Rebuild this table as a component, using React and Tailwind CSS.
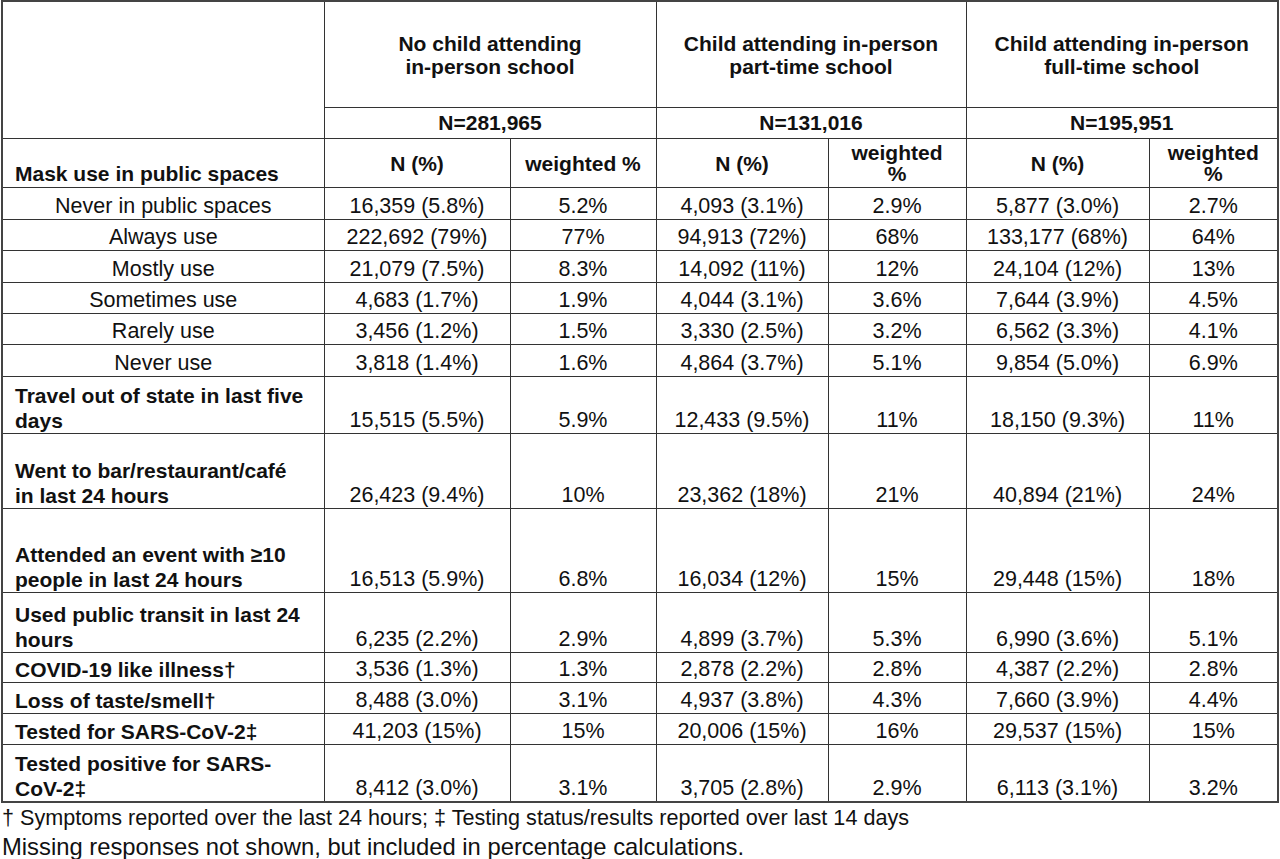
import React from "react";

const mask = [
  ["Never in public spaces", "16,359 (5.8%)", "5.2%", "4,093 (3.1%)", "2.9%", "5,877 (3.0%)", "2.7%", "h-[32px]"],
  ["Always use", "222,692 (79%)", "77%", "94,913 (72%)", "68%", "133,177 (68%)", "64%", "h-[31px]"],
  ["Mostly use", "21,079 (7.5%)", "8.3%", "14,092 (11%)", "12%", "24,104 (12%)", "13%", "h-[32px]"],
  ["Sometimes use", "4,683 (1.7%)", "1.9%", "4,044 (3.1%)", "3.6%", "7,644 (3.9%)", "4.5%", "h-[31px]"],
  ["Rarely use", "3,456 (1.2%)", "1.5%", "3,330 (2.5%)", "3.2%", "6,562 (3.3%)", "4.1%", "h-[31px]"],
  ["Never use", "3,818 (1.4%)", "1.6%", "4,864 (3.7%)", "5.1%", "9,854 (5.0%)", "6.9%", "h-[32px]"],
];

const other = [
  [["Travel out of state in last five", "days"], "15,515 (5.5%)", "5.9%", "12,433 (9.5%)", "11%", "18,150 (9.3%)", "11%", "h-[57px]"],
  [["Went to bar/restaurant/café", "in last 24 hours"], "26,423 (9.4%)", "10%", "23,362 (18%)", "21%", "40,894 (21%)", "24%", "h-[75px]"],
  [["Attended an event with ≥10", "people in last 24 hours"], "16,513 (5.9%)", "6.8%", "16,034 (12%)", "15%", "29,448 (15%)", "18%", "h-[84px]"],
  [["Used public transit in last 24", "hours"], "6,235 (2.2%)", "2.9%", "4,899 (3.7%)", "5.3%", "6,990 (3.6%)", "5.1%", "h-[60px]"],
  [["COVID-19 like illness†"], "3,536 (1.3%)", "1.3%", "2,878 (2.2%)", "2.8%", "4,387 (2.2%)", "2.8%", "h-[30px]"],
  [["Loss of taste/smell†"], "8,488 (3.0%)", "3.1%", "4,937 (3.8%)", "4.3%", "7,660 (3.9%)", "4.4%", "h-[31px]"],
  [["Tested for SARS-CoV-2‡"], "41,203 (15%)", "15%", "20,006 (15%)", "16%", "29,537 (15%)", "15%", "h-[31px]"],
  [["Tested positive for SARS-", "CoV-2‡"], "8,412 (3.0%)", "3.1%", "3,705 (2.8%)", "2.9%", "6,113 (3.1%)", "3.2%", "h-[58px]"],
];

const cell = "border border-[#333] px-0 align-bottom text-center pb-0";
const head = "border border-[#333] text-center align-middle font-bold text-[21px]";

export default function App() {
  return (
    <div className="bg-white w-[1280px] h-[859px] text-[#111] font-['Liberation_Sans',Arial,sans-serif] pl-[1px]">
      <table className="table-fixed border-collapse border-2 border-[#444] w-[1277px] text-[21.5px] leading-[25px]">
        <colgroup>
          <col className="w-[322px]" />
          <col className="w-[186px]" />
          <col className="w-[146px]" />
          <col className="w-[172px]" />
          <col className="w-[138px]" />
          <col className="w-[183px]" />
          <col className="w-[129px]" />
        </colgroup>
        <tbody>
          <tr className="h-[106px]">
            <td rowSpan={2} className="border border-[#333]"></td>
            <td colSpan={2} className={`${head} leading-[23px] pt-[2px]`}>No child attending<br />in-person school</td>
            <td colSpan={2} className={`${head} leading-[23px] pt-[2px]`}>Child attending in-person<br />part-time school</td>
            <td colSpan={2} className={`${head} leading-[23px] pt-[2px]`}>Child attending in-person<br />full-time school</td>
          </tr>
          <tr className="h-[31px]">
            <td colSpan={2} className={head}>N=281,965</td>
            <td colSpan={2} className={head}>N=131,016</td>
            <td colSpan={2} className={head}>N=195,951</td>
          </tr>
          <tr className="h-[49px]">
            <td className="border border-[#333] align-bottom font-bold text-[21px] leading-[24px] pl-3 pb-[1px]">Mask use in public spaces</td>
            <td className={`${head} leading-[24px] pt-[3px]`}>N (%)</td>
            <td className={`${head} leading-[24px] pt-[3px]`}>weighted %</td>
            <td className={`${head} leading-[24px] pt-[3px]`}>N (%)</td>
            <td className={`${head} leading-[21px]`}>weighted<br />%</td>
            <td className={`${head} leading-[24px] pt-[3px]`}>N (%)</td>
            <td className={`${head} leading-[21px]`}>weighted<br />%</td>
          </tr>
          {mask.map((r) => (
            <tr key={r[0]} className={r[7]}>
              <td className={cell}>{r[0]}</td>
              {r.slice(1, 7).map((v, i) => (
                <td key={i} className={cell}>{v}</td>
              ))}
            </tr>
          ))}
          {other.map((r) => (
            <tr key={r[0][0]} className={r[7]}>
              <td className="border border-[#333] align-bottom text-left font-bold text-[21px] pl-3 pb-0">
                {r[0].map((l, i) => (
                  <div key={i}>{l}</div>
                ))}
              </td>
              {r.slice(1, 7).map((v, i) => (
                <td key={i} className={cell}>{v}</td>
              ))}
            </tr>
          ))}
        </tbody>
      </table>
      <div className="pl-[1px]">
        <p className="text-[21.6px] leading-[29px]">† Symptoms reported over the last 24 hours; ‡ Testing status/results reported over last 14 days</p>
        <p className="text-[23.8px] leading-[29px]">Missing responses not shown, but included in percentage calculations.</p>
      </div>
    </div>
  );
}
